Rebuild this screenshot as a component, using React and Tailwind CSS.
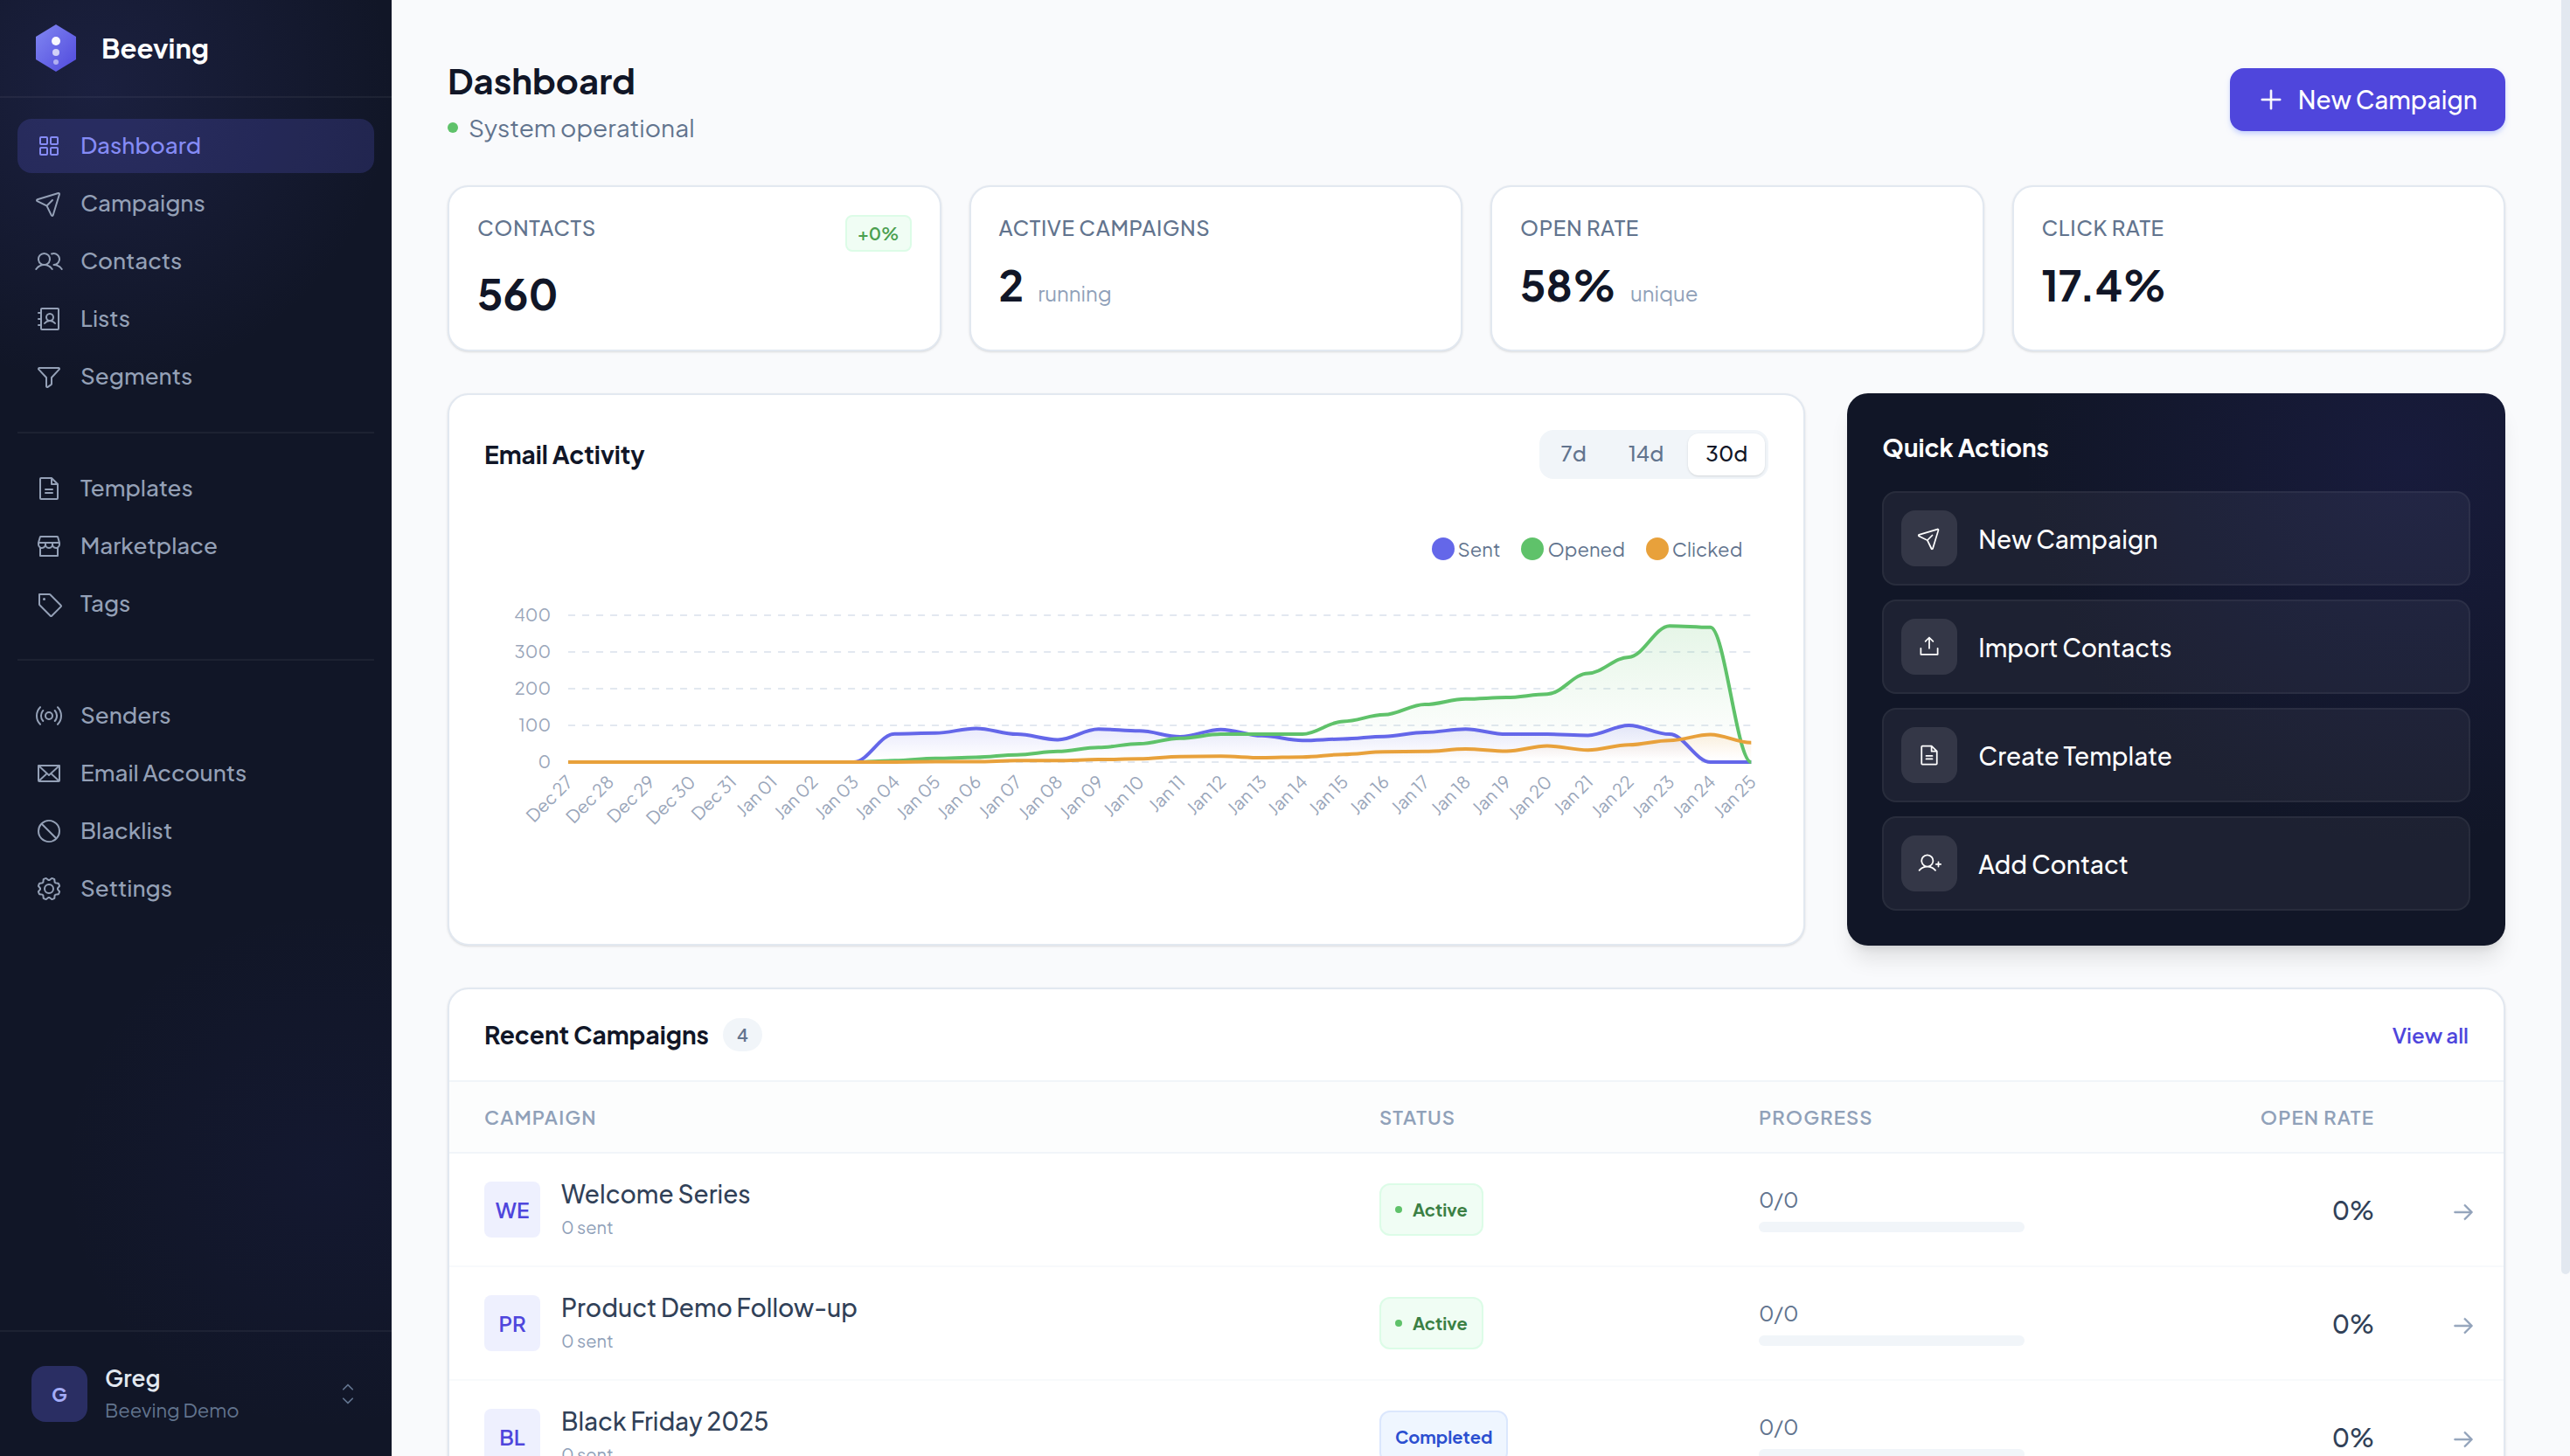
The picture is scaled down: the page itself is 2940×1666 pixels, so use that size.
import { useState } from 'react';
import clsx from 'clsx';
import {
  PiSquaresFour, PiPaperPlaneTilt, PiUsers, PiAddressBook, PiFunnel, PiFileText,
  PiStorefront, PiTag, PiBroadcast, PiEnvelope, PiProhibit, PiGear, PiCaretUpDown,
  PiPlus, PiUploadSimple, PiUserPlus, PiArrowRight,
} from 'react-icons/pi';

const NAV_GROUPS = [
  [
    { label: 'Dashboard', icon: PiSquaresFour, active: true },
    { label: 'Campaigns', icon: PiPaperPlaneTilt },
    { label: 'Contacts', icon: PiUsers },
    { label: 'Lists', icon: PiAddressBook },
    { label: 'Segments', icon: PiFunnel },
  ],
  [
    { label: 'Templates', icon: PiFileText },
    { label: 'Marketplace', icon: PiStorefront },
    { label: 'Tags', icon: PiTag },
  ],
  [
    { label: 'Senders', icon: PiBroadcast },
    { label: 'Email Accounts', icon: PiEnvelope },
    { label: 'Blacklist', icon: PiProhibit },
    { label: 'Settings', icon: PiGear },
  ],
];

const STATS = [
  { label: 'Contacts', value: '560', change: '+0%' },
  { label: 'Active Campaigns', value: '2', note: 'running' },
  { label: 'Open Rate', value: '58%', note: 'unique' },
  { label: 'Click Rate', value: '17.4%' },
];

const ACTIONS = [
  { label: 'New Campaign', icon: PiPaperPlaneTilt },
  { label: 'Import Contacts', icon: PiUploadSimple },
  { label: 'Create Template', icon: PiFileText },
  { label: 'Add Contact', icon: PiUserPlus },
];

const CAMPAIGNS = [
  { name: 'Welcome Series', sent: 0, status: 'Active', done: 0, total: 0, openRate: 0 },
  { name: 'Product Demo Follow-up', sent: 0, status: 'Active', done: 0, total: 0, openRate: 0 },
  { name: 'Black Friday 2025', sent: 0, status: 'Completed', done: 0, total: 0, openRate: 0 },
  { name: 'Monthly Newsletter', sent: 0, status: 'Completed', done: 0, total: 0, openRate: 0 },
];

const STATUS_STYLES = {
  Active: 'bg-[#f0fdf4] border-[#dcfce7] text-[#3b8044]',
  Completed: 'bg-[#eff6ff] border-[#dbe7fd] text-[#2b4fd0]',
};

const DAYS = [
  'Dec 27', 'Dec 28', 'Dec 29', 'Dec 30', 'Dec 31', 'Jan 01', 'Jan 02', 'Jan 03', 'Jan 04', 'Jan 05',
  'Jan 06', 'Jan 07', 'Jan 08', 'Jan 09', 'Jan 10', 'Jan 11', 'Jan 12', 'Jan 13', 'Jan 14', 'Jan 15',
  'Jan 16', 'Jan 17', 'Jan 18', 'Jan 19', 'Jan 20', 'Jan 21', 'Jan 22', 'Jan 23', 'Jan 24', 'Jan 25',
];

const SERIES = [
  {
    name: 'Sent', color: '#6467e9', dot: 'bg-[#6467e9]',
    data: [0, 0, 0, 0, 0, 0, 0, 0, 77, 79, 92, 76, 61, 90, 85, 69, 89, 72, 59, 63, 70, 81, 90, 76, 76, 73, 100, 76, 0, 0],
  },
  {
    name: 'Opened', color: '#5fc26a', dot: 'bg-[#5fc26a]',
    data: [0, 0, 0, 0, 0, 0, 0, 0, 4, 10, 13, 20, 29, 40, 50, 65, 76, 76, 76, 111, 129, 157, 172, 176, 185, 242, 286, 371, 367, 0],
  },
  {
    name: 'Clicked', color: '#e8a13b', dot: 'bg-[#e8a13b]',
    data: [0, 0, 0, 0, 0, 0, 0, 0, 0, 1, 1, 4, 4, 7, 9, 15, 16, 12, 14, 21, 28, 29, 36, 30, 44, 33, 47, 59, 75, 53],
  },
];

const RANGES = [
  { label: '7d', days: 7 },
  { label: '14d', days: 14 },
  { label: '30d', days: 30 },
];

// Plot area inside the 1469 x 380 chart
const LEFT = 96;
const RIGHT = 1449;
const BASE = 212;
const UNIT = 0.42;

const toPoints = (data) =>
  data.map((v, i) => [LEFT + (i * (RIGHT - LEFT)) / (data.length - 1), BASE - v * UNIT]);

const toPath = (points) =>
  points.reduce((d, [x, y], i) => {
    if (i === 0) return `M${x},${y}`;
    const [px, py] = points[i - 1];
    const k = (x - px) * 0.35;
    return `${d}C${px + k},${py} ${x - k},${y} ${x},${y}`;
  }, '');

function Logo() {
  return (
    <svg viewBox="0 0 56 56" className="w-14 h-14 shrink-0" aria-hidden="true">
      <defs>
        <linearGradient id="logo" x1="0" y1="0" x2="1" y2="1">
          <stop offset="0" stopColor="#8187f2" />
          <stop offset="1" stopColor="#5049dc" />
        </linearGradient>
      </defs>
      <path d="M28 1 51 15V41L28 55 5 41V15Z" fill="url(#logo)" />
      <circle cx="28" cy="20" r="5" fill="#fff" fillOpacity="0.95" />
      <circle cx="28" cy="33" r="4" fill="#fff" fillOpacity="0.7" />
      <circle cx="28" cy="44" r="3" fill="#fff" fillOpacity="0.5" />
    </svg>
  );
}

function Sidebar() {
  return (
    <aside className="w-[448px] shrink-0 flex flex-col bg-[#111627] bg-[radial-gradient(circle_340px_at_110px_100px,rgba(79,84,190,0.16),transparent),radial-gradient(circle_300px_at_370px_1340px,rgba(60,60,190,0.06),transparent)]">
      <div className="h-28 shrink-0 flex items-center gap-6 px-9 border-b-2 border-white/5">
        <Logo />
        <span className="text-[31px] font-bold text-white">Beeving</span>
      </div>

      <nav className="flex-1 min-h-0 px-5 py-6 divide-y-2 divide-white/5">
        {NAV_GROUPS.map((group, i) => (
          <ul key={i} className="space-y-1 not-first:pt-8 not-last:pb-8">
            {group.map(item => (
              <li key={item.label}>
                <a href="#"
                  className={clsx(
                    'flex items-center gap-5 h-[62px] px-5 rounded-2xl text-[26px] font-medium',
                    item.active ? 'bg-[#6366f1]/20 text-[#858bf5]' : 'text-[#94a0b6] hover:text-white'
                  )}>
                  <item.icon className="w-8 h-8 shrink-0" />
                  <span className="pb-1">{item.label}</span>
                </a>
              </li>
            ))}
          </ul>
        ))}
      </nav>

      <div className="shrink-0 h-36 flex items-center px-5 border-t-2 border-white/5">
        <button className="w-full flex items-center gap-5 px-4 text-left">
          <span className="w-16 h-16 rounded-2xl bg-[#2a2e63] text-[#a5adf8] text-[22px] font-bold flex items-center justify-center">
            G
          </span>
          <span className="flex-1">
            <span className="block text-[26px] leading-8 font-semibold text-slate-200">Greg</span>
            <span className="block text-[22px] leading-8 mt-1 text-slate-500">Beeving Demo</span>
          </span>
          <PiCaretUpDown className="w-7 h-7 text-slate-500" />
        </button>
      </div>
    </aside>
  );
}

function StatCard({ label, value, note, change }) {
  return (
    <div className="bg-white border-2 border-slate-200 rounded-3xl p-8 shadow-sm">
      <div className="flex items-start justify-between mb-4">
        <p className="text-[24px] leading-7 pb-1 font-medium tracking-wide uppercase text-slate-500">{label}</p>
        {change && (
          <span className="px-3 text-[20px] leading-[38px] font-semibold rounded-lg border-2 border-[#dcfce7] bg-[#f0fdf4] text-[#4c9f50]">
            {change}
          </span>
        )}
      </div>
      <div className="flex items-baseline gap-4">
        <span className="text-5xl leading-16 font-bold text-[#111627]">{value}</span>
        {note && <span className="text-[24px] text-slate-400">{note}</span>}
      </div>
    </div>
  );
}

function ActivityChart({ days }) {
  const labels = DAYS.slice(-days);
  const series = SERIES.map(s => ({ ...s, points: toPoints(s.data.slice(-days)) }));

  return (
    <svg viewBox="0 0 1469 380" className="w-full h-auto" role="img" aria-label="Email activity">
      <defs>
        {series.map(s => (
          <linearGradient key={s.name} id={`fill-${s.name}`} x1="0" y1="0" x2="0" y2="1">
            <stop offset="0" stopColor={s.color} stopOpacity="0.16" />
            <stop offset="0.9" stopColor={s.color} stopOpacity="0" />
          </linearGradient>
        ))}
      </defs>

      {[400, 300, 200, 100, 0].map(v => (
        <g key={v}>
          <line x1={LEFT} x2={RIGHT} y1={BASE - v * UNIT} y2={BASE - v * UNIT}
            stroke="#e2e8f0" strokeWidth="2" strokeDasharray="8 8" />
          <text x="76" y={BASE - v * UNIT + 7} textAnchor="end" fontSize="20" fill="#9aa6ba">{v}</text>
        </g>
      ))}

      {series.map(s => (
        <path key={s.name} d={`${toPath(s.points)}L${RIGHT},${BASE}L${LEFT},${BASE}Z`} fill={`url(#fill-${s.name})`} />
      ))}
      {series.map(s => (
        <path key={s.name} d={toPath(s.points)} fill="none" stroke={s.color} strokeWidth="4" />
      ))}

      {labels.map((day, i) => {
        const x = LEFT + (i * (RIGHT - LEFT)) / (labels.length - 1) + 7;
        return (
          <text key={day} x={x} y="236" transform={`rotate(-45 ${x} 236)`} textAnchor="end" fontSize="20" fill="#9aa6ba">
            {day}
          </text>
        );
      })}
    </svg>
  );
}

function EmailActivity() {
  const [days, setDays] = useState(30);

  return (
    <section className="col-span-2 bg-white border-2 border-slate-200 rounded-3xl p-10 shadow-sm">
      <div className="flex items-center justify-between">
        <h2 className="text-[28px] font-bold text-[#111627]">Email Activity</h2>
        <div className="flex gap-2 p-1 rounded-2xl bg-slate-100">
          {RANGES.map(r => (
            <button key={r.label}
              onClick={() => setDays(r.days)}
              className={clsx(
                'px-5 pb-1 text-[24px] leading-11 font-medium rounded-xl',
                days === r.days ? 'bg-white text-[#111627] shadow-sm' : 'text-slate-500'
              )}>
              {r.label}
            </button>
          ))}
        </div>
      </div>

      <div className="flex justify-end gap-6 mt-16 mb-4 pr-[30px]">
        {SERIES.map(s => (
          <span key={s.name} className="flex items-center gap-1 text-[22px] leading-8 text-slate-500">
            <span className={clsx('w-[26px] h-[26px] rounded-full', s.dot)} />
            {s.name}
          </span>
        ))}
      </div>

      <ActivityChart days={days} />
    </section>
  );
}

function QuickActions() {
  return (
    <section className="rounded-3xl p-10 shadow-xl bg-[#111627] bg-[radial-gradient(circle_440px_at_85%_80px,rgba(70,62,200,0.13),transparent)]">
      <h2 className="text-[28px] leading-11 font-bold text-white mb-7">Quick Actions</h2>
      <div className="space-y-4">
        {ACTIONS.map(a => (
          <button key={a.label}
            className="w-full flex items-center gap-6 p-5 rounded-2xl border-2 border-white/5 bg-white/5 text-white text-[28px] font-medium text-left hover:bg-white/10">
            <span className="w-16 h-16 rounded-2xl bg-white/10 flex items-center justify-center">
              <a.icon className="w-7 h-7" />
            </span>
            <span className="pt-0.5">{a.label}</span>
          </button>
        ))}
      </div>
    </section>
  );
}

function CampaignRow({ campaign }) {
  const { name, sent, status, done, total, openRate } = campaign;
  const progress = total ? (done / total) * 100 : 0;

  return (
    <tr className="border-b-2 border-slate-50 last:border-0">
      <td className="px-10 py-8">
        <div className="flex items-center gap-6">
          <span className="w-16 h-16 rounded-lg bg-[#eef0fe] text-[#4f46dc] text-[24px] font-semibold flex items-center justify-center">
            {name.slice(0, 2).toUpperCase()}
          </span>
          <div className="h-16">
            <p className="text-[28px] leading-7 font-medium text-slate-700">{name}</p>
            <p className="text-[20px] leading-7 mt-2.5 text-slate-400">{sent} sent</p>
          </div>
        </div>
      </td>
      <td className="px-10">
        <span className={clsx('inline-flex items-center gap-3 px-4 h-[60px] align-middle rounded-xl border-2 text-[20px] font-bold', STATUS_STYLES[status])}>
          {status === 'Active' && <span className="w-2 h-2 rounded-full bg-[#5fc26a]" />}
          {status}
        </span>
      </td>
      <td className="px-10">
        <p className="text-[24px] leading-7 text-slate-500">{done}/{total}</p>
        <div className="h-3 mt-3 rounded-full bg-slate-100 overflow-hidden">
          <div className="h-full bg-[#4f46dc]" style={{ width: `${progress}%` }} />
        </div>
      </td>
      <td className="px-10 pt-0.5 text-right text-[28px] font-medium text-slate-700">{openRate}%</td>
      <td className="pr-8 pt-1.5">
        <a href="#" aria-label={`Open ${name}`} className="flex justify-end text-slate-400">
          <PiArrowRight className="w-7 h-7" strokeWidth="6" />
        </a>
      </td>
    </tr>
  );
}

function RecentCampaigns() {
  return (
    <section className="bg-white border-2 border-slate-200 rounded-3xl shadow-sm overflow-hidden">
      <div className="h-[106px] flex items-center justify-between px-10 border-b-2 border-slate-100">
        <div className="flex items-center gap-4">
          <h2 className="text-[28px] font-bold text-[#111627]">Recent Campaigns</h2>
          <span className="px-4 text-[20px] leading-[38px] font-semibold rounded-full bg-slate-100 text-slate-500">
            {CAMPAIGNS.length}
          </span>
        </div>
        <a href="#" className="text-[24px] font-semibold text-[#4f46dc]">View all</a>
      </div>
      <table className="w-full table-fixed text-left">
        <thead>
          <tr className="h-[81px] text-[22px] tracking-wider text-slate-400 uppercase bg-[#fcfdfd] border-b-2 border-slate-100">
            <th className="px-10 font-semibold">Campaign</th>
            <th className="w-[434px] px-10 font-semibold">Status</th>
            <th className="w-[384px] px-10 font-semibold">Progress</th>
            <th className="w-[400px] px-10 font-semibold text-right">Open Rate</th>
            <th className="w-[108px]" />
          </tr>
        </thead>
        <tbody>
          {CAMPAIGNS.map(c => <CampaignRow key={c.name} campaign={c} />)}
        </tbody>
      </table>
    </section>
  );
}

export default function App() {
  return (
    <div className="h-screen flex bg-[#f9fafc] font-['Plus_Jakarta_Sans',Inter,sans-serif]">
      <Sidebar />

      <main className="flex-1 min-w-0 overflow-y-auto [scrollbar-width:none] p-16">
        {/* Header */}
        <div className="flex items-center justify-between mb-12">
          <div>
            <h1 className="text-[40px] leading-14 font-bold text-[#111627]">Dashboard</h1>
            <p className="flex items-center gap-3 mt-2 text-[28px] leading-9 text-slate-500">
              <span className="w-3 h-3 rounded-full bg-[#5fc26a]" />
              System operational
            </p>
          </div>
          <button className="flex items-center gap-4 h-[72px] px-8 rounded-2xl bg-[#4f46dc] text-white text-[28px] font-medium shadow-md shadow-indigo-200">
            <PiPlus className="w-[30px] h-[30px]" strokeWidth="6" /> New Campaign
          </button>
        </div>

        {/* Stats */}
        <div className="grid grid-cols-4 gap-8 mb-12">
          {STATS.map(s => <StatCard key={s.label} {...s} />)}
        </div>

        <div className="grid grid-cols-3 gap-12 mb-12">
          <EmailActivity />
          <QuickActions />
        </div>

        <RecentCampaigns />
      </main>

      {/* Scroll track */}
      <div className="w-[10px] shrink-0" aria-hidden="true">
        <div className="h-7/8 rounded-b-full bg-slate-200" />
      </div>
    </div>
  );
}
